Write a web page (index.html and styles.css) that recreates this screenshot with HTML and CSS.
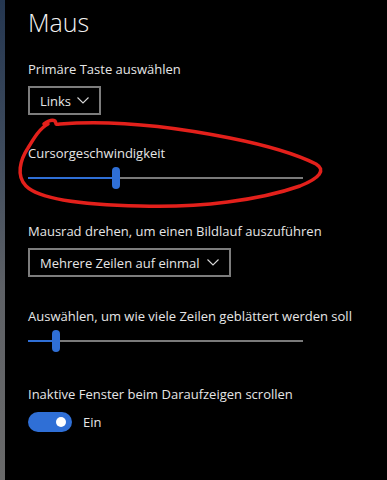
FILE: index.html
```html
<!DOCTYPE html>
<html lang="de">
<head>
<meta charset="utf-8">
<link rel="stylesheet" href="styles.css">
</head>
<body>
<div class="window">
  <div class="edge"></div>
  <main class="content">
    <h1 class="title">Maus</h1>

    <section class="group group-primary">
      <div class="label">Primäre Taste auswählen</div>
      <div class="select select-short">
        <span>Links</span>
        <svg class="chev" width="12" height="7" viewBox="0 0 12 7"><path d="M0.5 0.5 L6 6 L11.5 0.5" fill="none" stroke="#d8d8d8" stroke-width="1.1"/></svg>
      </div>
    </section>

    <section class="group group-slider">
      <div class="label">Cursorgeschwindigkeit</div>
      <div class="slider">
        <div class="fill" style="width:88px"></div>
        <div class="thumb"></div>
        <div class="rest"></div>
      </div>
    </section>

    <section class="group group-wheel">
      <div class="label">Mausrad drehen, um einen Bildlauf auszuführen</div>
      <div class="select select-long">
        <span>Mehrere Zeilen auf einmal</span>
        <svg class="chev" width="12" height="7" viewBox="0 0 12 7"><path d="M0.5 0.5 L6 6 L11.5 0.5" fill="none" stroke="#d8d8d8" stroke-width="1.1"/></svg>
      </div>
    </section>

    <section class="group group-lines">
      <div class="label">Auswählen, um wie viele Zeilen geblättert werden soll</div>
      <div class="slider">
        <div class="fill" style="width:28px"></div>
        <div class="thumb"></div>
        <div class="rest"></div>
      </div>
    </section>

    <section class="group group-toggle">
      <div class="label">Inaktive Fenster beim Daraufzeigen scrollen</div>
      <div class="toggle-row">
        <div class="toggle"><div class="knob"></div></div>
        <span class="toggle-text">Ein</span>
      </div>
    </section>
  </main>
  <svg class="scribble" width="387" height="480" viewBox="0 0 387 480">
    <path d="M44 124 C48 121 52 119 55 121 C57 124 54 125 60 124 C110 120 170 126 230 138 C270 146 300 156 316 164 C326 170 320 178 300 186 C260 200 200 208 140 206 C90 205 40 200 26 186 C16 176 20 160 28 148 C34 138 40 128 48 124" fill="none" stroke="#e3201b" stroke-width="3.5" stroke-linecap="round" stroke-linejoin="round"/>
  </svg>
</div>
</body>
</html>
```
FILE: styles.css
```css
html, body {
  margin: 0;
  padding: 0;
  background: #000;
}
body {
  width: 387px;
  height: 480px;
  overflow: hidden;
  font-family: "Open Sans", "Noto Sans", sans-serif;
  color: #e8e8e8;
}
.window {
  position: relative;
  display: flex;
  height: 480px;
}
.edge {
  width: 5px;
  flex: none;
  background: linear-gradient(to bottom, #243650 0%, #3d4a5c 30%, #5e6166 60%, #6a6a6a 100%);
}
.content {
  flex: 1;
  padding-left: 23px;
}
.title {
  margin: 5px 0 0 0;
  font-size: 25px;
  font-weight: 300;
  line-height: 34px;
  color: #f2f2f2;
}
.group {
  display: flex;
  flex-direction: column;
}
.label {
  font-size: 13px;
  line-height: 18px;
  color: #e6e6e6;
}
.group-primary { margin-top: 21px; }
.select {
  margin-top: 8px;
  height: 29px;
  box-sizing: border-box;
  border: 2px solid #7d7d7d;
  display: flex;
  align-items: center;
  padding-left: 10px;
  font-size: 13px;
  color: #e6e6e6;
}
.select-short { width: 73px; }
.select-long { width: 203px; }
.select .chev { margin-left: auto; margin-right: 10px; }
.group-slider { margin-top: 29px; }
.slider {
  margin-top: 4px;
  width: 275px;
  height: 24px;
  display: flex;
  align-items: center;
}
.fill {
  height: 2px;
  background: #2f6fd6;
  flex: none;
}
.thumb {
  width: 8px;
  height: 22px;
  border-radius: 4px;
  background: #2f6fd6;
  flex: none;
  margin-left: -4px;
}
.rest {
  flex: 1;
  height: 2px;
  background: #7a7a7a;
}
.group-wheel { margin-top: 32px; }
.group-lines { margin-top: 30px; }
.group-toggle { margin-top: 32px; }
.toggle-row {
  margin-top: 9px;
  display: flex;
  align-items: center;
  gap: 11px;
}
.toggle {
  width: 44px;
  height: 20px;
  border-radius: 10px;
  background: #2f6fd6;
  display: flex;
  align-items: center;
  justify-content: flex-end;
  padding-right: 6px;
  box-sizing: border-box;
}
.knob {
  width: 10px;
  height: 10px;
  border-radius: 50%;
  background: #fff;
}
.toggle-text {
  font-size: 13px;
  color: #e6e6e6;
}
.scribble {
  position: absolute;
  left: 0;
  top: 0;
  pointer-events: none;
}
```
